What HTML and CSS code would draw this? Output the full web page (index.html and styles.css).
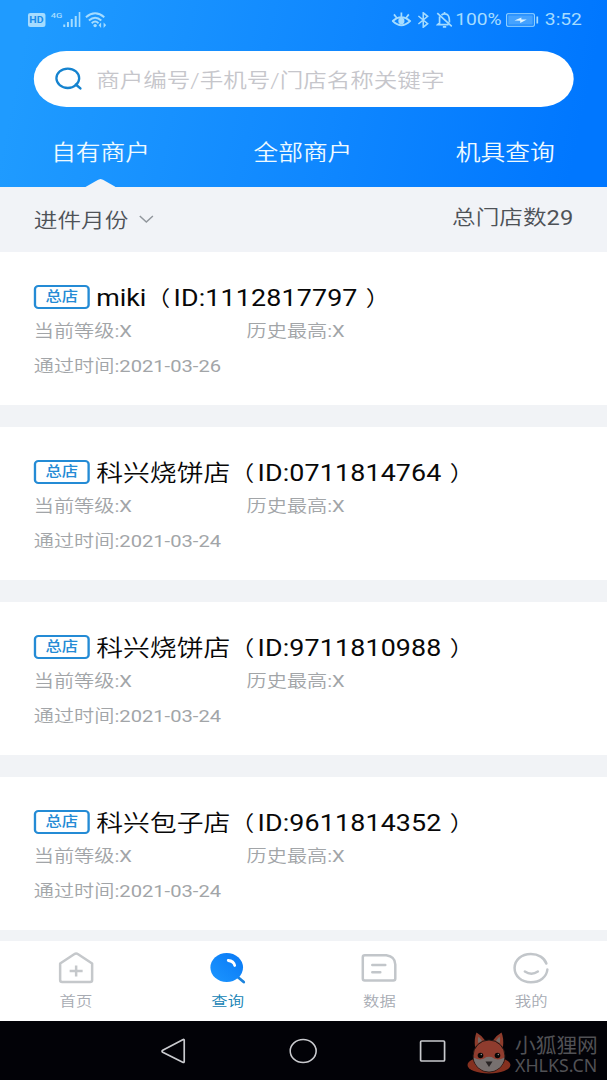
FILE: index.html
```html
<!DOCTYPE html>
<html lang="zh-CN">
<head>
<meta charset="utf-8">
<title>商户查询</title>
<link rel="stylesheet" href="styles.css">
</head>
<body>
<div class="viewport">
<div class="screen">
  <header class="header">
    <div class="status">
      <div class="status-left">
        <span class="hd">HD</span>
        <span class="net">4G</span>
        <svg class="signal" viewBox="0 0 18 16" preserveAspectRatio="none"><path d="M1.3 12.5V15M5 10v5M8.8 7v8M12.8 4v11M16.8 0v15" stroke="currentColor" stroke-width="2" fill="none"/></svg>
        <svg class="wifi" viewBox="0 0 21 16" preserveAspectRatio="none"><g fill="none" stroke="currentColor" stroke-width="1.9"><path d="M.8 5.3Q10-2.6 19.2 5.3M3.8 8.5Q10 2.8 16.2 8.500M6.600 11.200Q10 8 13.400 11.200"/></g><circle cx="10" cy="13.6" r="1.7" fill="currentColor"/><path d="M13.500 13.200l2.500-2.800v5.600zM21 13.200l-2.500-2.800v5.600z" fill="currentColor"/></svg>
      </div>
      <div class="status-right">
        <svg class="eye" viewBox="0 0 20 16" preserveAspectRatio="none"><g fill="none" stroke="currentColor" stroke-width="1.8"><path d="M1 9Q10 1.2 19 9Q10 17.4 1 9zM10 4.5V.5M4.8 5.5L2.3 2.4M15.2 5.5l2.5-3.1"/></g><circle cx="10" cy="9" r="3.2" fill="currentColor"/></svg>
        <svg class="bt" viewBox="0 0 12 16" preserveAspectRatio="none"><path d="M1 4l9.5 7.7L6 15.2V.8l4.5 3.5L1 12" fill="none" stroke="currentColor" stroke-width="1.6"/></svg>
        <svg class="bell" viewBox="0 0 17 16" preserveAspectRatio="none"><path d="M1.2 1.200l14.600 13.200M3.500 4.500V11L1.500 12.700H12.500M5.400 3Q8.400.8 11.600 2.800Q13.600 4.500 13.400 10.500M8.500 0v2M6.800 14.800h3.400" fill="none" stroke="currentColor" stroke-width="1.7"/></svg>
        <span class="pct">100%</span>
        <svg class="battery" viewBox="0 0 33 14" preserveAspectRatio="none"><rect x=".6" y=".8" width="28" height="12.4" rx="1.2" fill="none" stroke="currentColor" stroke-width="1.1"/><rect x="2.2" y="2.3" width="24.8" height="9.4" fill="currentColor" opacity=".4"/><path d="M8.5 7.6l7-3v2h5.5l-6.7 3.3V7.7z" fill="#dff4ff"/><path d="M31.6 3.5v7" stroke="currentColor" stroke-width="1.8"/></svg>
        <span class="clock">3:52</span>
      </div>
    </div>
    <div class="search">
      <svg class="search-icon" viewBox="0 0 28 24" preserveAspectRatio="none"><ellipse cx="13" cy="11.3" rx="11.4" ry="9.7" fill="none" stroke="#1583cf" stroke-width="2.3"/><path d="M21 17.5l4.6 3.9" stroke="#1583cf" stroke-width="2.5" stroke-linecap="round"/></svg>
      <span>商户编号/手机号/门店名称关键字</span>
    </div>
    <nav class="tabs">
      <div class="tab tab-active">自有商户</div>
      <div class="tab">全部商户</div>
      <div class="tab">机具查询</div>
    </nav>
  </header>
  <div class="filter">
    <div class="month">进件月份
      <svg class="chevron" viewBox="0 0 15 9" preserveAspectRatio="none"><path d="M1 1l6.5 6L14 1" fill="none" stroke="#92979d" stroke-width="1.5"/></svg>
    </div>
    <div class="total">总门店数<span class="latin">29</span></div>
  </div>
  <main class="list">
    <article class="card">
      <div class="title"><span class="tag">总店</span><span class="name"><span class="latin">miki</span><span class="open">（</span><span class="latin id">ID:1112817797</span><span class="close">）</span></span></div>
      <div class="levels"><span>当前等级<span class="latin">:X</span></span><span>历史最高<span class="latin">:X</span></span></div>
      <div class="date">通过时间<span class="latin">:2021-03-26</span></div>
    </article>
    <article class="card">
      <div class="title"><span class="tag">总店</span><span class="name">科兴烧饼店<span class="open">（</span><span class="latin id">ID:0711814764</span><span class="close">）</span></span></div>
      <div class="levels"><span>当前等级<span class="latin">:X</span></span><span>历史最高<span class="latin">:X</span></span></div>
      <div class="date">通过时间<span class="latin">:2021-03-24</span></div>
    </article>
    <article class="card">
      <div class="title"><span class="tag">总店</span><span class="name">科兴烧饼店<span class="open">（</span><span class="latin id">ID:9711810988</span><span class="close">）</span></span></div>
      <div class="levels"><span>当前等级<span class="latin">:X</span></span><span>历史最高<span class="latin">:X</span></span></div>
      <div class="date">通过时间<span class="latin">:2021-03-24</span></div>
    </article>
    <article class="card">
      <div class="title"><span class="tag">总店</span><span class="name">科兴包子店<span class="open">（</span><span class="latin id">ID:9611814352</span><span class="close">）</span></span></div>
      <div class="levels"><span>当前等级<span class="latin">:X</span></span><span>历史最高<span class="latin">:X</span></span></div>
      <div class="date">通过时间<span class="latin">:2021-03-24</span></div>
    </article>
  </main>
  <nav class="bottom">
    <div class="item">
      <svg class="nav-icon" viewBox="0 0 38 34" preserveAspectRatio="none"><g fill="none" stroke="#c5c8cb" stroke-width="2.5" stroke-linejoin="round"><path d="M3 12.5L17 3.2Q19 2 21 3.2L35 12.5V29Q35 31 33 31H5Q3 31 3 29z"/><path d="M19 14.5v11M12.5 20h13"/></g></svg>
      <span>首页</span>
    </div>
    <div class="item item-active">
      <svg class="nav-icon" viewBox="0 0 38 34" preserveAspectRatio="none"><defs><linearGradient id="lens" x1="0" y1="1" x2="1" y2="0"><stop offset="0" stop-color="#1c96ff"/><stop offset="1" stop-color="#0878f5"/></linearGradient></defs><path d="M29 26l6 5" stroke="#1c83dc" stroke-width="2.8" stroke-linecap="round"/><ellipse cx="18" cy="16.5" rx="16.3" ry="14.5" fill="url(#lens)"/><path d="M19.5 9.500Q25 10 26 14.500" fill="none" stroke="#fff" stroke-width="2.8" stroke-linecap="round"/></svg>
      <span>查询</span>
    </div>
    <div class="item">
      <svg class="nav-icon" viewBox="0 0 38 34" preserveAspectRatio="none"><g fill="none" stroke="#c2c6ca" stroke-width="2.5" stroke-linejoin="round" stroke-linecap="round"><path d="M4.500 4.200H26Q35 5.500 35 13.500V27.500Q35 29.500 33 29.500H4.500Q2.500 29.500 2.500 27.500V6.200Q2.500 4.200 4.500 4.200z"/><path d="M12 14h13M12 21.200h8"/></g></svg>
      <span>数据</span>
    </div>
    <div class="item">
      <svg class="nav-icon" viewBox="0 0 38 34" preserveAspectRatio="none"><g fill="none" stroke="#c2c6ca" stroke-width="2.5" stroke-linecap="round"><path d="M35.500 18.500C34.800 26 28 31.300 19 31.300C9.500 31.300 2.700 25 2.700 17C2.700 9 9.500 3 19 3C26.500 3 32.500 6.800 34.500 12.500"/><path d="M13 20.500Q19.500 25 26 20.500"/></g></svg>
      <span>我的</span>
    </div>
  </nav>
  <footer class="system">
    <svg class="sys-icon" viewBox="0 0 28 28" preserveAspectRatio="none"><path d="M24.500 3.300V24.500Q24.500 26 23 25.200L3 15.200Q1.500 14.200 3 13.200L23 2.700Q24.500 2 24.500 3.300z" fill="none" stroke="#c9cace" stroke-width="1.7"/></svg>
    <svg class="sys-icon" viewBox="0 0 28 28" preserveAspectRatio="none"><ellipse cx="14" cy="14" rx="13" ry="11.500" fill="none" stroke="#c9cace" stroke-width="1.600"/></svg>
    <svg class="sys-icon" viewBox="0 0 28 28" preserveAspectRatio="none"><rect x="2" y="4" width="24" height="20" rx="1" fill="none" stroke="#c9cace" stroke-width="1.700"/></svg>
  </footer>
</div>
<div class="watermark">
  <svg class="fox" viewBox="0 0 44 44"><ellipse cx="22" cy="34" rx="21.500" ry="8.500" fill="#85301f"/><path d="M8 16Q7 7 9.500 1.500Q15 4.500 18.500 10zM36 16Q37 7 34.500 1.500Q29 4.500 25.500 10z" fill="#8d3c2c"/><path d="M11 12Q10.500 8 11.500 5.500Q14 8 15 10zM33 12Q33.500 8 32.500 5.500Q30 8 29 10z" fill="#756b67"/><circle cx="22" cy="25" r="16" fill="#8f3c2e" stroke="#1d1513" stroke-width="1"/><path d="M6.500 26.500Q14 30.500 19.500 26Q22 25.500 24.500 26Q30 30.500 37.500 26.500C36.500 35 30 40.500 22 40.500S7.500 35 6.500 26.500z" fill="#77706f"/><circle cx="13.500" cy="24.500" r="2.800" fill="#080706"/><circle cx="30.500" cy="24.500" r="2.800" fill="#080706"/><circle cx="14.300" cy="23.500" r=".7" fill="#999"/><circle cx="31.300" cy="23.500" r=".7" fill="#999"/><path d="M18.500 30.500h7L22 36z" fill="#292425"/></svg>
  <div class="mark-text"><span class="mark-cn">小狐狸网</span><span class="mark-en">XHLKS.CN</span></div>
</div>
</div>
</body>
</html>
```
FILE: styles.css
```css
* { box-sizing: border-box; }
body {
  margin: 0;
  background: #fff;
  font-family: Roboto, "Noto Sans CJK SC", sans-serif;
}
svg { display: block; flex: none; }
.viewport { position: relative; width: 607px; height: 1080px; overflow: hidden; }

/* The screen is laid out on a narrow column and widened to fill the window. */
.screen {
  width: 520.6px;
  height: 1080px;
  display: flex;
  flex-direction: column;
  transform: scaleX(1.166);
  transform-origin: 0 0;
  font-weight: 350;
  white-space: nowrap;
}
.latin { font-weight: 400; }
.id { letter-spacing: .13px; }
.header {
  height: 187px;
  background: linear-gradient(100deg, #1f9bff 5%, #0f87ff 55%, #0077ff 94%);
}
.status {
  height: 51px;
  padding: 0 21.500px 12px 24px;
  display: flex;
  justify-content: space-between;
  align-items: center;
  color: #a5dcff;
}
.status-left, .status-right { display: flex; align-items: center; }
.hd {
  width: 14.500px;
  height: 14px;
  border-radius: 2px;
  background: #a5dcff;
  color: #198cec;
  font: 700 9px/14px Roboto, sans-serif;
  text-align: center;
}
.net { margin: -9px 0 0 5px; font: 500 8px/9px Roboto, sans-serif; width: 10px; }
.signal { width: 15.400px; height: 16px; margin-right: 4px; }
.wifi { width: 18px; height: 16px; }
.eye { width: 16.500px; height: 16px; }
.bt { width: 10px; height: 16px; margin-left: 5px; }
.bell { width: 14.500px; height: 16px; margin-left: 6px; }
.pct { margin-left: 2px; font-size: 16.500px; font-weight: 400; }
.battery { width: 28px; height: 14px; margin-left: 4px; }
.clock { margin-left: 5px; font-size: 16.500px; font-weight: 400; }
.search {
  height: 56px;
  margin: 0 29px;
  padding-left: 18px;
  display: flex;
  align-items: center;
  gap: 11.500px;
  border-radius: 28px;
  background: #fff;
  color: #c6c6cb;
  font-size: 20.200px;
}
.search-icon { width: 24px; height: 24px; }
.tabs { height: 80px; display: flex; }
.tab {
  flex: 1;
  display: flex;
  flex-direction: column;
  align-items: center;
  padding: 30px 1px 0 0;
  color: #eefaff;
  font-size: 21.200px;
  line-height: 32px;
}
.tab-active::after {
  content: "";
  width: 26px;
  height: 8px;
  margin-top: 10px;
  background: #f1f3f7;
  clip-path: polygon(0 100%, 42% 8%, 50% 0, 58% 8%, 100% 100%);
}
.filter {
  height: 65px;
  padding: 0 29px;
  display: flex;
  justify-content: space-between;
  background: #f1f3f7;
  color: #4e5257;
  font-size: 20.300px;
  line-height: 30px;
}
.month { display: flex; gap: 9px; padding-top: 19px; }
.chevron { width: 13px; height: 9px; margin-top: 9px; }
.total { padding-top: 16px; }
.list { height: 689px; display: flex; flex-direction: column; gap: 22px; background: #f1f3f6; }
.card { height: 153px; padding: 27px 29px 0; background: #fff; }
.title { height: 35px; display: flex; align-items: center; gap: 5.500px; }
.tag {
  width: 48px;
  height: 24px;
  border: 2px solid #248bd5;
  border-radius: 4px;
  color: #248bd5;
  font-size: 14px;
  font-weight: 500;
  line-height: 19px;
  text-align: center;
}
.name {
  height: 35px;
  padding-top: 1px;
  color: #080808;
  font-size: 23px;
  line-height: 37px;
}
.open, .close { display: inline-block; width: 23.300px; font-size: 21px; line-height: 20px; }
.open { text-indent: -.5px; }
.close { text-indent: 7px; }
.levels { display: grid; grid-template-columns: 182.500px 1fr; }
.levels, .date { color: #a2a5a8; font-size: 17.300px; line-height: 34px; }
.date { padding-top: 1px; }
.bottom { height: 80px; display: flex; background: #fff; }
.item {
  flex: 1;
  display: flex;
  flex-direction: column;
  align-items: center;
  padding: 10px 0 0 0;
  color: #a7abb3;
  font-size: 14px;
  line-height: 20px;
}
.item span { margin-top: 6px; }
.item-active { color: #1583b5; }
.nav-icon { width: 32.600px; height: 34px; }
.system {
  height: 59px;
  padding-left: 137px;
  display: flex;
  align-items: center;
  gap: 87px;
  background: #020207;
}
.sys-icon { width: 24px; height: 28px; }
.watermark {
  position: absolute;
  left: 467px;
  top: 1031px;
  display: flex;
  gap: 4px;
  color: #515155;
}
.fox { width: 44px; height: 44px; }
.mark-text { display: flex; flex-direction: column; white-space: nowrap; }
.mark-cn { font: 400 20.700px/26px "Noto Sans CJK SC", sans-serif; }
.mark-en { font: 400 17.800px/17px "Noto Sans", sans-serif; }
```
